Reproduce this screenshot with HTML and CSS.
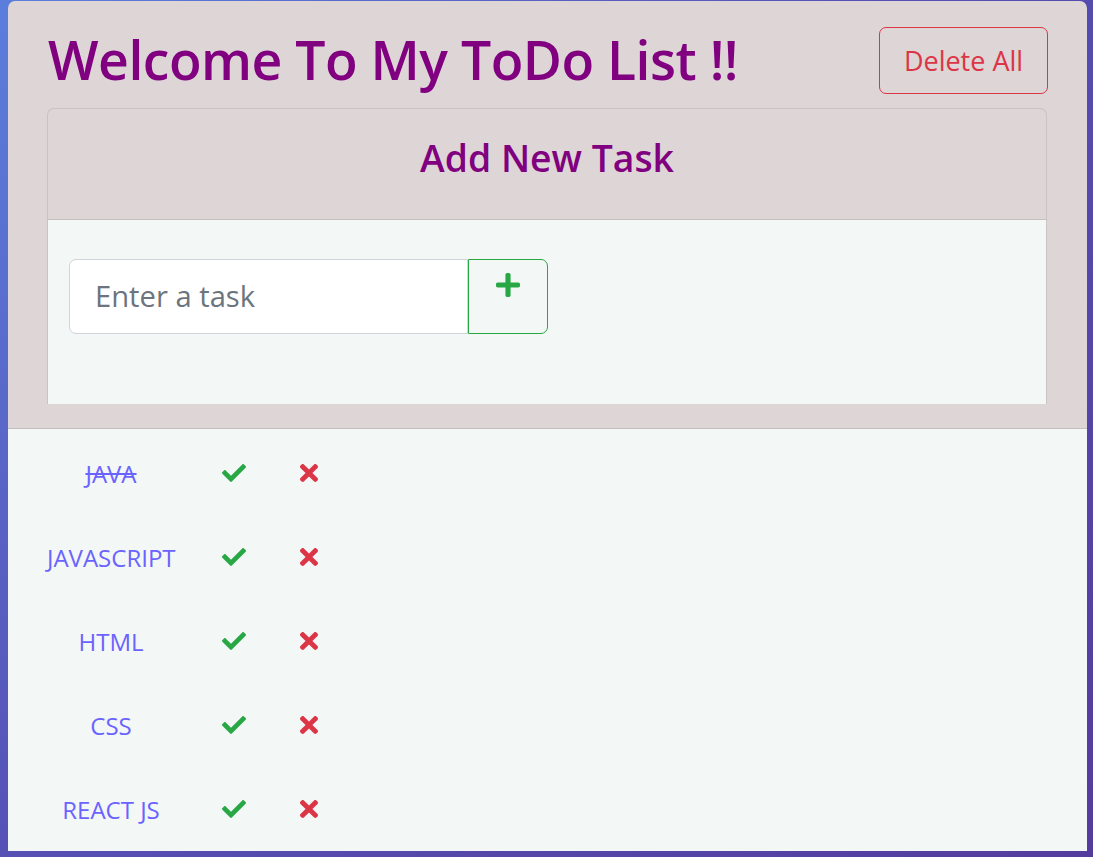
FILE: index.html
```html
<!DOCTYPE html>
<html lang="en">
<head>
<meta charset="utf-8">
<title>ToDo List</title>
<link rel="stylesheet" href="styles.css">
</head>
<body>
<div class="app">
  <div class="top">
    <div class="title-row">
      <h1 class="title">Welcome To My ToDo List !!</h1>
      <button class="btn-delete">Delete All</button>
    </div>
    <div class="card">
      <div class="card-header">Add New Task</div>
      <div class="card-body">
        <div class="input-group">
          <input class="task-input" type="text" placeholder="Enter a task">
          <button class="btn-add" aria-label="Add">
            <svg class="icon-plus" viewBox="0 32 448 448" width="24" height="24"><path fill="#28a745" d="M416 208H272V64c0-17.67-14.33-32-32-32h-32c-17.670 0-32 14.33-32 32v144H32c-17.67 0-32 14.33-32 32v32c0 17.67 14.33 32 32 32h144v144c0 17.67 14.33 32 32 32h32c17.67 0 32-14.33 32-32V304h144c17.67 0 32-14.33 32-32v-32c0-17.670-14.33-32-32-32z"/></svg>
          </button>
        </div>
      </div>
    </div>
  </div>
  <ul class="list">
    <li class="item">
      <span class="item-text done">JAVA</span>
      <svg class="icon-check" viewBox="0 64 512 384" width="24" height="18"><path fill="#28a745" d="M173.898 439.404l-166.4-166.4c-9.997-9.997-9.997-26.206 0-36.204l36.203-36.204c9.997-9.998 26.207-9.998 36.204 0L192 312.69 432.095 72.596c9.997-9.997 26.207-9.997 36.204 0l36.203 36.204c9.997 9.997 9.997 26.206 0 36.204l-294.4 294.401c-9.998 9.997-26.207 9.997-36.204-.001z"/></svg>
      <svg class="icon-x" viewBox="0 80 352 352" width="18" height="18"><path fill="#dc3545" d="M242.72 256l100.07-100.07c12.280-12.28 12.28-32.19 0-44.48l-22.24-22.24c-12.28-12.28-32.19-12.28-44.48 0L176 189.28 75.93 89.21c-12.28-12.28-32.19-12.28-44.48 0L9.21 111.45c-12.28 12.28-12.28 32.19 0 44.48L109.28 256 9.21 356.07c-12.28 12.28-12.28 32.19 0 44.48l22.24 22.24c12.28 12.28 32.2 12.28 44.48 0L176 322.72l100.07 100.07c12.28 12.28 32.2 12.28 44.48 0l22.24-22.24c12.28-12.28 12.28-32.19 0-44.48L242.72 256z"/></svg>
    </li>
    <li class="item">
      <span class="item-text">JAVASCRIPT</span>
      <svg class="icon-check" viewBox="0 64 512 384" width="24" height="18"><path fill="#28a745" d="M173.898 439.404l-166.4-166.4c-9.997-9.997-9.997-26.206 0-36.204l36.203-36.204c9.997-9.998 26.207-9.998 36.204 0L192 312.69 432.095 72.596c9.997-9.997 26.207-9.997 36.204 0l36.203 36.204c9.997 9.997 9.997 26.206 0 36.204l-294.4 294.401c-9.998 9.997-26.207 9.997-36.204-.001z"/></svg>
      <svg class="icon-x" viewBox="0 80 352 352" width="18" height="18"><path fill="#dc3545" d="M242.72 256l100.07-100.07c12.280-12.28 12.28-32.19 0-44.48l-22.24-22.24c-12.28-12.28-32.19-12.28-44.48 0L176 189.28 75.93 89.21c-12.28-12.28-32.19-12.28-44.48 0L9.21 111.45c-12.28 12.28-12.28 32.19 0 44.48L109.28 256 9.21 356.07c-12.28 12.28-12.28 32.19 0 44.48l22.24 22.24c12.28 12.28 32.2 12.28 44.48 0L176 322.72l100.07 100.07c12.28 12.28 32.2 12.28 44.48 0l22.24-22.24c12.28-12.28 12.28-32.19 0-44.48L242.72 256z"/></svg>
    </li>
    <li class="item">
      <span class="item-text">HTML</span>
      <svg class="icon-check" viewBox="0 64 512 384" width="24" height="18"><path fill="#28a745" d="M173.898 439.404l-166.4-166.4c-9.997-9.997-9.997-26.206 0-36.204l36.203-36.204c9.997-9.998 26.207-9.998 36.204 0L192 312.69 432.095 72.596c9.997-9.997 26.207-9.997 36.204 0l36.203 36.204c9.997 9.997 9.997 26.206 0 36.204l-294.4 294.401c-9.998 9.997-26.207 9.997-36.204-.001z"/></svg>
      <svg class="icon-x" viewBox="0 80 352 352" width="18" height="18"><path fill="#dc3545" d="M242.72 256l100.07-100.07c12.280-12.28 12.28-32.19 0-44.48l-22.24-22.24c-12.28-12.28-32.19-12.28-44.48 0L176 189.28 75.93 89.21c-12.28-12.28-32.19-12.28-44.48 0L9.21 111.45c-12.28 12.28-12.28 32.19 0 44.48L109.28 256 9.21 356.07c-12.28 12.28-12.28 32.19 0 44.48l22.24 22.24c12.28 12.28 32.2 12.28 44.48 0L176 322.72l100.07 100.07c12.28 12.28 32.2 12.28 44.48 0l22.24-22.24c12.28-12.28 12.28-32.19 0-44.48L242.72 256z"/></svg>
    </li>
    <li class="item">
      <span class="item-text">CSS</span>
      <svg class="icon-check" viewBox="0 64 512 384" width="24" height="18"><path fill="#28a745" d="M173.898 439.404l-166.4-166.4c-9.997-9.997-9.997-26.206 0-36.204l36.203-36.204c9.997-9.998 26.207-9.998 36.204 0L192 312.69 432.095 72.596c9.997-9.997 26.207-9.997 36.204 0l36.203 36.204c9.997 9.997 9.997 26.206 0 36.204l-294.4 294.401c-9.998 9.997-26.207 9.997-36.204-.001z"/></svg>
      <svg class="icon-x" viewBox="0 80 352 352" width="18" height="18"><path fill="#dc3545" d="M242.72 256l100.07-100.07c12.280-12.28 12.28-32.19 0-44.48l-22.24-22.24c-12.28-12.28-32.19-12.28-44.48 0L176 189.28 75.93 89.21c-12.28-12.28-32.19-12.28-44.48 0L9.21 111.45c-12.28 12.28-12.28 32.19 0 44.48L109.28 256 9.21 356.07c-12.28 12.28-12.28 32.19 0 44.48l22.24 22.24c12.28 12.28 32.2 12.28 44.48 0L176 322.72l100.07 100.07c12.28 12.28 32.2 12.28 44.48 0l22.24-22.24c12.28-12.28 12.28-32.19 0-44.48L242.72 256z"/></svg>
    </li>
    <li class="item">
      <span class="item-text">REACT JS</span>
      <svg class="icon-check" viewBox="0 64 512 384" width="24" height="18"><path fill="#28a745" d="M173.898 439.404l-166.4-166.4c-9.997-9.997-9.997-26.206 0-36.204l36.203-36.204c9.997-9.998 26.207-9.998 36.204 0L192 312.69 432.095 72.596c9.997-9.997 26.207-9.997 36.204 0l36.203 36.204c9.997 9.997 9.997 26.206 0 36.204l-294.4 294.401c-9.998 9.997-26.207 9.997-36.204-.001z"/></svg>
      <svg class="icon-x" viewBox="0 80 352 352" width="18" height="18"><path fill="#dc3545" d="M242.72 256l100.07-100.07c12.280-12.28 12.28-32.19 0-44.48l-22.24-22.24c-12.28-12.28-32.19-12.28-44.48 0L176 189.28 75.93 89.21c-12.28-12.28-32.19-12.28-44.48 0L9.21 111.45c-12.28 12.28-12.28 32.19 0 44.48L109.28 256 9.21 356.07c-12.28 12.28-12.28 32.19 0 44.48l22.24 22.24c12.28 12.28 32.2 12.28 44.48 0L176 322.72l100.07 100.07c12.28 12.28 32.2 12.28 44.48 0l22.24-22.24c12.28-12.28 12.28-32.19 0-44.48L242.72 256z"/></svg>
    </li>
  </ul>
</div>
</body>
</html>
```

FILE: styles.css
```css
* { box-sizing: border-box; }

html {
  height: 100%;
  background: linear-gradient(135deg, #5b7edc 0%, #5650b4 45%, #543c9e 100%);
}

body {
  margin: 1px 6px 0 8px;
  font-family: "Open Sans", "Noto Sans", sans-serif;
}

.app {
  width: 1079px;
  height: 850px;
  background: #ddd5d6;
  border-radius: 7px 7px 0 0;
  box-shadow: 1px 1px 2px rgba(0, 0, 0, 0.35);
  display: flex;
  flex-direction: column;
  overflow: hidden;
}

.top {
  padding: 0 40px 24px 39px;
  border-bottom: 1px solid #c5bdbe;
}

.title-row {
  display: flex;
  justify-content: space-between;
  align-items: center;
  height: 107px;
  padding-top: 12px;
}

.title {
  margin: 0 0 0 1px;
  font-size: 53.5px;
  font-weight: 600;
  line-height: 1.2;
  color: #800080;
  letter-spacing: -0.5px;
}

.btn-delete {
  width: 169px;
  height: 67px;
  margin-right: -1px;
  background: transparent;
  border: 1px solid #dc3545;
  border-radius: 7px;
  color: #dc3545;
  font-family: inherit;
  font-size: 27px;
  padding: 0;
}

.card {
  border: 1px solid #cac2c3;
  border-bottom: none;
  border-radius: 7px 7px 0 0;
  overflow: hidden;
}

.card-header {
  height: 111px;
  display: flex;
  align-items: center;
  justify-content: center;
  border-bottom: 1px solid #c6bebf;
  color: #800080;
  font-size: 37.3px;
  font-weight: 600;
  padding-bottom: 14px;
}

.card-body {
  background: #f3f7f6;
  height: 184px;
  padding: 39px 21px 0;
  box-shadow: 1px 1px 1px rgba(0, 0, 0, 0.08);
}

.input-group {
  display: flex;
}

.task-input {
  width: 399px;
  height: 75px;
  border: 1px solid #ced4da;
  border-radius: 7px 0 0 7px;
  background: #fff;
  padding: 0 0 2px 25px;
  font-family: inherit;
  font-size: 29.2px;
  color: #495057;
  outline: none;
}

.task-input::placeholder {
  color: #6c757d;
}

.btn-add {
  width: 80px;
  height: 75px;
  background: transparent;
  border: 1px solid #28a745;
  border-radius: 0 7px 7px 0;
  padding: 13px 0 0;
  display: flex;
  justify-content: center;
  align-items: flex-start;
}

.icon-plus { display: block; }

.list {
  flex: 1;
  margin: 0;
  padding: 2px 0 0 39px;
  list-style: none;
  background: #f3f7f6;
}

.item {
  height: 84px;
  display: flex;
  align-items: center;
}

.item-text {
  width: 128px;
  text-align: center;
  color: #6b63ff;
  font-size: 24px;
  white-space: nowrap;
}

.item-text.done {
  text-decoration: line-through;
}

.icon-check {
  margin-left: 47px;
  flex: none;
}

.icon-x {
  margin-left: 54px;
  flex: none;
}
```
